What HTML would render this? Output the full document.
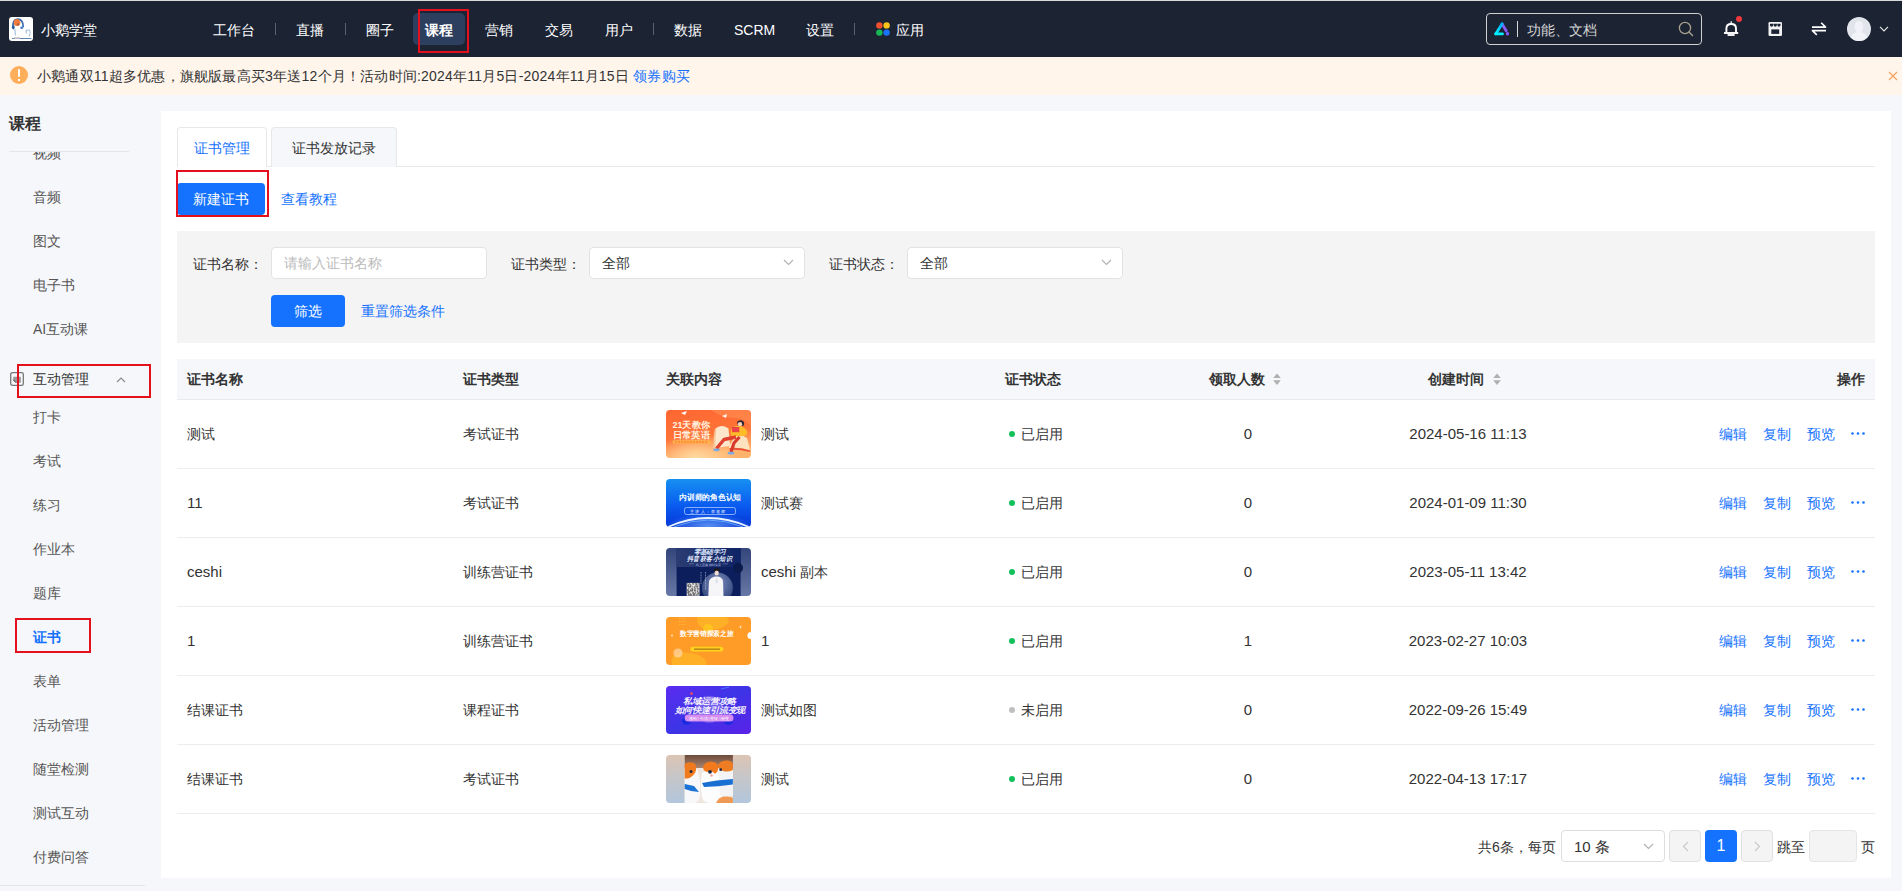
<!DOCTYPE html>
<html><head><meta charset="utf-8">
<style>
*{box-sizing:border-box;margin:0;padding:0}
svg{display:block}
html,body{width:1902px;height:891px;overflow:hidden}
body{position:relative;background:#f5f7fa;font-family:"Liberation Sans",sans-serif;font-size:14px;color:#333}
.a{position:absolute;white-space:nowrap}
#topline{left:0;top:0;width:1902px;height:1px;background:#d9d9d9}
#nav{left:0;top:1px;width:1902px;height:56px;background:#1c2333}
.ni{color:#fff;font-size:14px;line-height:20px;top:19px}
.sep{width:1px;height:12px;background:#5a6170;top:23px}
#banner{left:0;top:57px;width:1902px;height:38px;background:#fff5eb}
#card{left:161px;top:111px;width:1730px;height:767px;background:#fff}
.side{color:#555;line-height:20px;left:33px}
.red{border:2px solid #e5101d}
.blue{color:#1472ff}
.btn{background:#1472ff;color:#fff;border-radius:4px;text-align:center}
.th{font-weight:bold;color:#333;line-height:20px;top:369px}
.row{left:177px;width:1698px;height:69px;border-bottom:1px solid #ebedf0}
.cell{line-height:20px;top:24px}
.thumb{left:489px;top:10px;width:85px;height:48px;border-radius:4px;overflow:hidden}
.num{font-size:15px}
.dot{width:6px;height:6px;border-radius:3px;top:31px;left:832px}
</style></head><body>
<div class="a" id="topline"></div>
<div class="a" id="nav"></div>
<!-- NAV -->
<div class="a" style="left:9px;top:17px;width:24px;height:24px;background:#fff;border-radius:3px;overflow:hidden">
  <svg width="24" height="24" viewBox="0 0 24 24">
    <path d="M4 11 Q3.2 2.2 8.6 2.1 Q14.2 2.2 14.2 10" stroke="#3a6aae" stroke-width="1.7" fill="none"/>
    <ellipse cx="4.3" cy="10.3" rx="1.4" ry="2.1" fill="#2c5c9c"/>
    <ellipse cx="12.8" cy="10.7" rx="1.6" ry="1.2" fill="#4a80c8"/>
    <ellipse cx="8" cy="5.6" rx="3.3" ry="3.5" fill="#f27a3a"/>
    <circle cx="9" cy="7.4" r="1.2" fill="#a8643a"/>
    <path d="M5.9 12 L6.4 18.5 M17.1 12.6 L17.3 16.5" stroke="#7ea6cc" stroke-width="0.8" fill="none"/>
    <path d="M17.4 14 Q19 12.2 20.6 13 Q22.2 15 20.2 19.5" stroke="#8ab0d4" stroke-width="0.8" fill="none"/>
    <path d="M3 21.5 L22.5 21.5" stroke="#4a7aa4" stroke-width="0.9"/>
    <rect x="5.3" y="20.2" width="5" height="1.6" fill="#f6c8c0" stroke="#a8c4d8" stroke-width="0.5"/>
  </svg>
</div>
<div class="a ni" style="left:41px;top:20px">小鹅学堂</div>
<div class="a ni" style="left:213px;top:20px">工作台</div>
<div class="a sep" style="left:275px"></div>
<div class="a ni" style="left:296px;top:20px">直播</div>
<div class="a sep" style="left:345px"></div>
<div class="a ni" style="left:366px;top:20px">圈子</div>
<div class="a" style="left:413px;top:13px;width:52px;height:32px;background:#2d3f5e;border-radius:5px"></div>
<div class="a ni" style="left:425px;top:20px;font-weight:bold">课程</div>
<div class="a red" style="left:418px;top:9px;width:51px;height:44px"></div>
<div class="a ni" style="left:485px;top:20px">营销</div>
<div class="a ni" style="left:545px;top:20px">交易</div>
<div class="a ni" style="left:605px;top:20px">用户</div>
<div class="a sep" style="left:653px"></div>
<div class="a ni" style="left:674px;top:20px">数据</div>
<div class="a ni" style="left:734px;top:20px">SCRM</div>
<div class="a ni" style="left:806px;top:20px">设置</div>
<div class="a sep" style="left:854px"></div>
<div class="a" style="left:876px;top:22px;width:14px;height:14px">
  <svg width="14" height="14" viewBox="0 0 14 14"><circle cx="3.4" cy="3.4" r="3.2" fill="#f0502e"/><circle cx="10.6" cy="3.4" r="3.2" fill="#fbc21a"/><circle cx="3.4" cy="10.6" r="3.2" fill="#17b955"/><circle cx="10.6" cy="10.6" r="3.2" fill="#1a73f5"/></svg>
</div>
<div class="a ni" style="left:896px;top:20px">应用</div>
<!-- search -->
<div class="a" style="left:1486px;top:13px;width:216px;height:32px;border:1px solid #d0d0d0;border-radius:4px"></div>
<div class="a" style="left:1494px;top:22px;width:16px;height:14px">
  <svg width="16" height="14" viewBox="0 0 16 14"><defs><linearGradient id="lg1" x1="0" y1="1" x2="0.3" y2="0"><stop offset="0" stop-color="#00f4ff"/><stop offset="1" stop-color="#00b4ff"/></linearGradient></defs>
  <path d="M8.2 2.2 L12.2 8.8" stroke="#8a5cff" stroke-width="2.8" fill="none" stroke-linecap="round"/>
  <path d="M1.7 11.9 L8.1 1.7" stroke="url(#lg1)" stroke-width="2.8" fill="none" stroke-linecap="round"/>
  <path d="M1.7 11.9 L8.5 11.9" stroke="#00eeff" stroke-width="2.8" stroke-linecap="round"/>
  <circle cx="13.5" cy="11.8" r="1.7" fill="#8a5cff"/></svg>
</div>
<div class="a" style="left:1517px;top:21px;width:1px;height:16px;background:#d8d8d8"></div>
<div class="a ni" style="left:1527px;top:20px;color:#d6d6d6">功能、文档</div>
<div class="a" style="left:1678px;top:21px;width:16px;height:16px">
  <svg width="16" height="16" viewBox="0 0 16 16"><circle cx="7" cy="7" r="5.6" stroke="#a8a090" stroke-width="1.3" fill="none"/><path d="M11 11 L14.5 14.5" stroke="#a8a090" stroke-width="1.4" stroke-linecap="round"/></svg>
</div>
<!-- right icons -->
<div class="a" style="left:1723px;top:20px;width:16px;height:17px">
  <svg width="16" height="17" viewBox="0 0 16 17"><path d="M3.4 12.5 L3.4 8.5 Q3.4 4 8.2 4 Q13 4 13 8.5 L13 12.5" stroke="#fff" stroke-width="1.9" fill="none"/><path d="M1 13 L15.2 13" stroke="#fff" stroke-width="1.9"/><rect x="4.6" y="14" width="7" height="2" fill="#eee"/><path d="M8.2 4 L8.2 1.2" stroke="#fff" stroke-width="1.3"/></svg>
</div>
<div class="a" style="left:1736px;top:16px;width:6px;height:6px;border-radius:3px;background:#f0383c"></div>
<div class="a" style="left:1768px;top:21px;width:15px;height:16px">
  <svg width="15" height="16" viewBox="0 0 15 16"><rect x="0.5" y="1" width="13.5" height="14" rx="1.3" fill="#f2f2f4"/><rect x="3.3" y="8.4" width="7.9" height="4.5" fill="#1c2333"/><path d="M1.9 2.8 h3.3 v1.2 a1.65 1.65 0 0 1 -3.3 0 z M5.6 2.8 h3.3 v1.2 a1.65 1.65 0 0 1 -3.3 0 z M9.3 2.8 h3.3 v1.2 a1.65 1.65 0 0 1 -3.3 0 z" fill="#1c2333"/></svg>
</div>
<div class="a" style="left:1811px;top:22px;width:16px;height:14px">
  <svg width="16" height="14" viewBox="0 0 16 14"><path d="M1 5.1 L14.6 5.1 L10.2 0.8" stroke="#fff" stroke-width="1.6" fill="none" stroke-linejoin="round"/><path d="M15 8.6 L1.4 8.6 L5.8 12.9" stroke="#fff" stroke-width="1.6" fill="none" stroke-linejoin="round"/></svg>
</div>
<div class="a" style="left:1847px;top:17px;width:24px;height:24px;border-radius:12px;background:#e2e4ec;overflow:hidden">
  <svg width="24" height="24" viewBox="0 0 24 24"><path d="M12 4.2 Q16.3 4.2 16.3 9.2 Q16.3 13 14.2 15.2 Q20 16.5 21.5 24 L2.5 24 Q4 16.5 9.8 15.2 Q7.7 13 7.7 9.2 Q7.7 4.2 12 4.2 Z" fill="#f2f3f8"/></svg>
</div>
<div class="a" style="left:1879px;top:26px;width:10px;height:7px">
  <svg width="10" height="7" viewBox="0 0 10 7"><path d="M1 0.8 L5 4.8 L9 0.8" stroke="#e6e6e6" stroke-width="1.2" fill="none"/></svg>
</div>

<div class="a" id="banner"></div>
<div class="a" id="card"></div>
<!-- BANNER -->
<div class="a" style="left:10px;top:66px;width:18px;height:18px;border-radius:9px;background:#ffaf5c"></div>
<div class="a" style="left:18px;top:69px;width:2px;height:8px;background:#fff;border-radius:1px"></div>
<div class="a" style="left:18px;top:79px;width:2px;height:2px;background:#fff"></div>
<div class="a" style="left:37px;top:66px;line-height:20px;color:#333;letter-spacing:0.21px">小鹅通双11超多优惠，旗舰版最高买3年送12个月！活动时间:2024年11月5日-2024年11月15日 <span style="color:#1472ff">领券购买</span></div>
<div class="a" style="left:1888px;top:71px;width:10px;height:10px">
  <svg width="10" height="10" viewBox="0 0 10 10"><path d="M1 1 L9 9 M9 1 L1 9" stroke="#f5a05a" stroke-width="1.1"/></svg>
</div>
<!-- SIDEBAR -->
<div class="a" style="left:9px;top:113px;font-size:16px;font-weight:bold;line-height:22px;color:#333">课程</div>
<div class="a" style="left:0;top:152px;width:161px;height:734px;overflow:hidden">
  <div class="a side" style="top:-9px">视频</div>
  <div class="a side" style="top:35px">音频</div>
  <div class="a side" style="top:79px">图文</div>
  <div class="a side" style="top:123px">电子书</div>
  <div class="a side" style="top:167px">AI互动课</div>
  <div class="a side" style="top:217px;color:#333">互动管理</div>
  <div class="a side" style="top:255px">打卡</div>
  <div class="a side" style="top:299px">考试</div>
  <div class="a side" style="top:343px">练习</div>
  <div class="a side" style="top:387px">作业本</div>
  <div class="a side" style="top:431px">题库</div>
  <div class="a side" style="top:475px;color:#1472ff;font-weight:bold">证书</div>
  <div class="a side" style="top:519px">表单</div>
  <div class="a side" style="top:563px">活动管理</div>
  <div class="a side" style="top:607px">随堂检测</div>
  <div class="a side" style="top:651px">测试互动</div>
  <div class="a side" style="top:695px">付费问答</div>
</div>
<div class="a" style="left:9px;top:151px;width:120px;height:1px;background:#e3e5e8"></div>
<div class="a" style="left:0;top:885px;width:145px;height:1px;background:#e3e5e8"></div>
<div class="a" style="left:10px;top:372px;width:14px;height:14px">
  <svg width="14" height="14" viewBox="0 0 14 14"><rect x="0.7" y="0.7" width="12.6" height="12.6" rx="1.6" stroke="#777" stroke-width="1.3" fill="none"/><path d="M3.2 4.8 L10.8 4.8 L10.8 10.8 L6.2 10.8 L3.2 7.8 Z" fill="#999"/><path d="M3.2 7.8 L6.2 10.8" stroke="#333" stroke-width="1"/></svg>
</div>
<div class="a" style="left:116px;top:376px;width:10px;height:7px">
  <svg width="10" height="7" viewBox="0 0 10 7"><path d="M1 6 L5 2 L9 6" stroke="#888" stroke-width="1.1" fill="none"/></svg>
</div>
<div class="a red" style="left:17px;top:364px;width:134px;height:34px"></div>
<div class="a red" style="left:15px;top:618px;width:76px;height:35px"></div>
<!-- TABS -->
<div class="a" style="left:397px;top:166px;width:1478px;height:1px;background:#e8e8e8"></div>
<div class="a" style="left:266px;top:166px;width:6px;height:1px;background:#e8e8e8"></div>
<div class="a" style="left:177px;top:127px;width:90px;height:40px;background:#fff;border:1px solid #e8e8e8;border-bottom:none;border-radius:4px 4px 0 0"></div>
<div class="a" style="left:194px;top:138px;line-height:20px;color:#1472ff">证书管理</div>
<div class="a" style="left:271px;top:127px;width:126px;height:40px;background:#f5f7fa;border:1px solid #e8e8e8;border-bottom:none;border-radius:4px 4px 0 0"></div>
<div class="a" style="left:292px;top:138px;line-height:20px;color:#333">证书发放记录</div>
<!-- ACTIONS -->
<div class="a btn" style="left:177px;top:183px;width:88px;height:32px;line-height:32px">新建证书</div>
<div class="a red" style="left:176px;top:170px;width:93px;height:47px"></div>
<div class="a blue" style="left:281px;top:189px;line-height:20px">查看教程</div>
<!-- FILTER -->
<div class="a" style="left:177px;top:231px;width:1698px;height:112px;background:#f4f4f4"></div>
<div class="a" style="left:193px;top:254px;line-height:20px;color:#333">证书名称：</div>
<div class="a" style="left:271px;top:247px;width:216px;height:32px;background:#fff;border:1px solid #e3e3e3;border-radius:4px"></div>
<div class="a" style="left:284px;top:253px;line-height:20px;color:#bbb">请输入证书名称</div>
<div class="a" style="left:511px;top:254px;line-height:20px;color:#333">证书类型：</div>
<div class="a" style="left:589px;top:247px;width:216px;height:32px;background:#fff;border:1px solid #e3e3e3;border-radius:4px"></div>
<div class="a" style="left:602px;top:253px;line-height:20px;color:#333">全部</div>
<div class="a" style="left:783px;top:259px;width:11px;height:7px"><svg width="11" height="7" viewBox="0 0 11 7"><path d="M1 1 L5.5 5.5 L10 1" stroke="#b0b0b0" stroke-width="1.1" fill="none"/></svg></div>
<div class="a" style="left:829px;top:254px;line-height:20px;color:#333">证书状态：</div>
<div class="a" style="left:907px;top:247px;width:216px;height:32px;background:#fff;border:1px solid #e3e3e3;border-radius:4px"></div>
<div class="a" style="left:920px;top:253px;line-height:20px;color:#333">全部</div>
<div class="a" style="left:1101px;top:259px;width:11px;height:7px"><svg width="11" height="7" viewBox="0 0 11 7"><path d="M1 1 L5.5 5.5 L10 1" stroke="#b0b0b0" stroke-width="1.1" fill="none"/></svg></div>
<div class="a btn" style="left:271px;top:295px;width:74px;height:32px;line-height:32px">筛选</div>
<div class="a blue" style="left:361px;top:301px;line-height:20px">重置筛选条件</div>
<!-- TABLE HEADER -->
<div class="a" style="left:177px;top:359px;width:1698px;height:41px;background:#f5f7fa;border-bottom:1px solid #e8eaee"></div>
<div class="a th" style="left:187px">证书名称</div>
<div class="a th" style="left:463px">证书类型</div>
<div class="a th" style="left:666px">关联内容</div>
<div class="a th" style="left:1005px">证书状态</div>
<div class="a th" style="left:1209px">领取人数</div>
<div class="a" style="left:1272.5px;top:373px;width:8px;height:12px"><svg width="8" height="12" viewBox="0 0 8 12"><path d="M4 0.6 L7.8 4.9 L0.2 4.9 Z M4 11.9 L7.8 7.3 L0.2 7.3 Z" fill="#b0b0b0"/></svg></div>
<div class="a th" style="left:1428px">创建时间</div>
<div class="a" style="left:1492.5px;top:373px;width:8px;height:12px"><svg width="8" height="12" viewBox="0 0 8 12"><path d="M4 0.6 L7.8 4.9 L0.2 4.9 Z M4 11.9 L7.8 7.3 L0.2 7.3 Z" fill="#b0b0b0"/></svg></div>
<div class="a th" style="left:1837px">操作</div>
<!-- PAGINATION -->
<div class="a" style="left:1478px;top:837px;line-height:20px;color:#333">共6条，每页</div>
<div class="a" style="left:1561px;top:830px;width:104px;height:32px;background:#fff;border:1px solid #dedede;border-radius:4px"></div>
<div class="a num" style="left:1574px;top:837px;line-height:20px;color:#333">10 条</div>
<div class="a" style="left:1643px;top:843px;width:11px;height:7px"><svg width="11" height="7" viewBox="0 0 11 7"><path d="M1 1 L5.5 5.5 L10 1" stroke="#b0b0b0" stroke-width="1.1" fill="none"/></svg></div>
<div class="a" style="left:1669px;top:830px;width:32px;height:32px;background:#f4f4f4;border:1px solid #e0e0e0;border-radius:4px"></div>
<div class="a" style="left:1682px;top:841px;width:7px;height:11px"><svg width="7" height="11" viewBox="0 0 7 11"><path d="M6 1 L1.5 5.5 L6 10" stroke="#c8c8c8" stroke-width="1.1" fill="none"/></svg></div>
<div class="a" style="left:1705px;top:830px;width:32px;height:32px;background:#1472ff;border-radius:4px;color:#fff;text-align:center;line-height:32px;font-size:16px">1</div>
<div class="a" style="left:1741px;top:830px;width:32px;height:32px;background:#f4f4f4;border:1px solid #e0e0e0;border-radius:4px"></div>
<div class="a" style="left:1754px;top:841px;width:7px;height:11px"><svg width="7" height="11" viewBox="0 0 7 11"><path d="M1 1 L5.5 5.5 L1 10" stroke="#c8c8c8" stroke-width="1.1" fill="none"/></svg></div>
<div class="a" style="left:1777px;top:837px;line-height:20px;color:#333">跳至</div>
<div class="a" style="left:1809px;top:830px;width:48px;height:32px;background:#f4f4f4;border:1px solid #e5e5e5;border-radius:4px"></div>
<div class="a" style="left:1861px;top:837px;line-height:20px;color:#333">页</div>
<!-- ROWS -->
<div class="a row" style="top:400px">
  <div class="a cell" style="left:10px">测试</div>
  <div class="a cell" style="left:286px">考试证书</div>
  <div class="a thumb t1"><svg width="85" height="48" viewBox="0 0 85 48">
<defs>
<linearGradient id="g1a" x1="0" y1="0" x2="0.3" y2="1"><stop offset="0" stop-color="#ff6631"/><stop offset="0.6" stop-color="#ff7438"/><stop offset="1" stop-color="#ffb26a"/></linearGradient>
<radialGradient id="g1b" cx="0.35" cy="1" r="0.5"><stop offset="0" stop-color="#ffd9a0"/><stop offset="1" stop-color="#ffd9a0" stop-opacity="0"/></radialGradient>
</defs>
<rect width="85" height="48" fill="url(#g1a)"/>
<rect width="85" height="48" fill="url(#g1b)"/>
<path d="M45 0 Q55 8 70 8 Q85 10 85 20 L85 0 Z" fill="#ff8a50" opacity="0.7"/>
<text x="6.5" y="18.4" font-family="Liberation Sans" font-weight="bold" font-size="8.8" fill="#fff3e0" textLength="37.5" lengthAdjust="spacingAndGlyphs">21天教你</text>
<text x="6.5" y="28" font-family="Liberation Sans" font-weight="bold" font-size="8.8" fill="#fff3e0" textLength="37.5" lengthAdjust="spacingAndGlyphs">日常英语</text>
<rect x="6.5" y="30.3" width="38.5" height="3.4" rx="1.5" fill="#ffb14a"/>
<path d="M9 32 L42 32" stroke="#ff6a30" stroke-width="1" stroke-dasharray="2 1"/>
<path d="M47.5 38 L49 19 Q55 13.5 62.5 18.5 L64 36 Z" fill="#fde7cc"/>
<path d="M49 19 Q47 28 47.5 38 L49.5 38 Q49 28 50.5 19.5 Z" fill="#f6c89a"/>
<path d="M63 36.5 L69 26 Q76 24.5 81 28 L84 40 Q74 37 63 38 Z" fill="#fde2c0"/>
<path d="M64 38 Q74 37 84 40.5 L84 42 Q74 39 63 39.5 Z" fill="#e8503a"/>
<path d="M71 12 Q74 9 77.5 11.5 Q79 14 77 16 L72 16 Z" fill="#2a2438"/>
<circle cx="74" cy="14.2" r="2.2" fill="#f8d0b0"/>
<path d="M65 24 Q64 17 70 16 Q78 15.5 81 21 Q82 25 78 26 L66 26.5 Z" fill="#ffbb28"/>
<rect x="66" y="17" width="7.3" height="5.2" fill="#e8444a"/>
<path d="M70 27 L58 29.5 L50.5 38.5" stroke="#e0402e" stroke-width="3.4" fill="none" stroke-linejoin="round"/>
<path d="M73.5 27 L68 33 L65 42" stroke="#d8382a" stroke-width="3.2" fill="none" stroke-linejoin="round"/>
<ellipse cx="50.5" cy="39.8" rx="3.4" ry="1.4" fill="#7aaae6"/>
<ellipse cx="65" cy="43.2" rx="3.4" ry="1.4" fill="#7aaae6"/>
<path d="M15 3 L21 1 L19 5 Z" fill="#fff"/>
<path d="M56 6 L61 4 L60 8 Z" fill="#fff" opacity="0.9"/>
</svg></div>
  <div class="a cell" style="left:584px">测试</div>
  <div class="a dot" style="background:#13c15a"></div>
  <div class="a cell" style="left:844px">已启用</div>
  <div class="a cell num" style="left:1047px;width:48px;text-align:center">0</div>
  <div class="a cell num" style="left:1211px;width:160px;text-align:center">2024-05-16 11:13</div>
  <div class="a cell blue" style="left:1542px">编辑</div>
  <div class="a cell blue" style="left:1586px">复制</div>
  <div class="a cell blue" style="left:1630px">预览</div>
  <div class="a" style="left:1674px;top:32px;width:14px;height:3px"><svg width="14" height="3" viewBox="0 0 14 3"><circle cx="1.5" cy="1.5" r="1.3" fill="#1472ff"/><circle cx="7" cy="1.5" r="1.3" fill="#1472ff"/><circle cx="12.5" cy="1.5" r="1.3" fill="#1472ff"/></svg></div>
</div>
<div class="a row" style="top:469px">
  <div class="a cell num" style="left:10px">11</div>
  <div class="a cell" style="left:286px">考试证书</div>
  <div class="a thumb t2"><svg width="85" height="48" viewBox="0 0 85 48">
<defs>
<linearGradient id="g2a" x1="0" y1="0" x2="0" y2="1"><stop offset="0" stop-color="#1690f2"/><stop offset="0.55" stop-color="#0a5cf0"/><stop offset="1" stop-color="#0636d8"/></linearGradient>
<radialGradient id="g2b" cx="0.5" cy="0.95" r="0.5"><stop offset="0" stop-color="#8ec8ff"/><stop offset="1" stop-color="#8ec8ff" stop-opacity="0"/></radialGradient>
</defs>
<rect width="85" height="48" fill="url(#g2a)"/>
<rect y="24" width="85" height="24" fill="url(#g2b)" opacity="0.6"/>
<path d="M2 48 Q42 30 83 48" stroke="#e8f4ff" stroke-width="1.8" fill="none"/>
<path d="M8 48 Q42 34 77 48" stroke="#7fc0ff" stroke-width="1" fill="none" opacity="0.7"/>
<text x="13" y="21" font-family="Liberation Sans" font-weight="bold" font-size="7.8" fill="#fff" textLength="62" lengthAdjust="spacingAndGlyphs">内训师的角色认知</text>
<rect x="18.5" y="28.5" width="51" height="7" rx="2" stroke="#bcd8ff" stroke-width="0.7" fill="none"/>
<text x="42.5" y="34" text-anchor="middle" font-family="Liberation Sans" font-size="4" fill="#fff" letter-spacing="1.2">主讲人：李老师</text>
</svg></div>
  <div class="a cell" style="left:584px">测试赛</div>
  <div class="a dot" style="background:#13c15a"></div>
  <div class="a cell" style="left:844px">已启用</div>
  <div class="a cell num" style="left:1047px;width:48px;text-align:center">0</div>
  <div class="a cell num" style="left:1211px;width:160px;text-align:center">2024-01-09 11:30</div>
  <div class="a cell blue" style="left:1542px">编辑</div>
  <div class="a cell blue" style="left:1586px">复制</div>
  <div class="a cell blue" style="left:1630px">预览</div>
  <div class="a" style="left:1674px;top:32px;width:14px;height:3px"><svg width="14" height="3" viewBox="0 0 14 3"><circle cx="1.5" cy="1.5" r="1.3" fill="#1472ff"/><circle cx="7" cy="1.5" r="1.3" fill="#1472ff"/><circle cx="12.5" cy="1.5" r="1.3" fill="#1472ff"/></svg></div>
</div>
<div class="a row" style="top:538px">
  <div class="a cell num" style="left:10px">ceshi</div>
  <div class="a cell" style="left:286px">训练营证书</div>
  <div class="a thumb t3"><svg width="85" height="48" viewBox="0 0 85 48">
<defs>
<linearGradient id="g3a" x1="0" y1="0" x2="0" y2="1"><stop offset="0" stop-color="#33457a"/><stop offset="1" stop-color="#6878a6"/></linearGradient>
<radialGradient id="g3b" cx="0.5" cy="0.35" r="0.6"><stop offset="0" stop-color="#8090c0"/><stop offset="1" stop-color="#34487e"/></radialGradient>
<linearGradient id="g3c" x1="0" y1="0" x2="1" y2="0"><stop offset="0" stop-color="#2a3c72"/><stop offset="1" stop-color="#0f2466"/></linearGradient>
</defs>
<rect width="85" height="48" fill="url(#g3a)"/>
<rect x="10.6" y="0" width="64" height="48" fill="#0c1f5c"/>
<rect x="10.6" y="0" width="64" height="19" fill="url(#g3c)"/>
<circle cx="51.4" cy="40" r="15.5" fill="url(#g3b)"/>
<circle cx="72" cy="20" r="5" fill="#0a1a4a"/>
<text x="27.5" y="6.2" font-family="Liberation Sans" font-weight="bold" font-style="italic" font-size="6.4" fill="#dfe8ff" textLength="32" lengthAdjust="spacingAndGlyphs">零基础学习</text>
<text x="20.7" y="13.2" font-family="Liberation Sans" font-weight="bold" font-style="italic" font-size="6.5" fill="#e8eeff" textLength="45.8" lengthAdjust="spacingAndGlyphs">抖音获客小知识</text>
<path d="M23 15.8 L28 15.8 M57 15.8 L62 15.8" stroke="#8a9ac8" stroke-width="0.5"/>
<text x="42.5" y="17.5" text-anchor="middle" font-family="Liberation Sans" font-size="2.8" fill="#b0bce0">线上直播 限时免费</text>
<path d="M47.5 23.5 Q47.5 19.8 50.7 19.8 Q53.9 19.8 53.9 23.5 Z" fill="#1a1a22"/>
<ellipse cx="50.7" cy="25" rx="2.2" ry="2.6" fill="#f2dcd0"/>
<path d="M42.3 48 L43 33 Q45 28.5 50.7 28.5 Q56 28.5 57 33 L57.5 48 Z" fill="#f6f6f8"/>
<path d="M50.7 28.5 L49.5 34 L50.7 36 L52 34 Z" fill="#dde0e8"/>
<rect x="20.7" y="34.9" width="12.8" height="12.8" fill="#e6e6e6"/>
<rect x="21.2" y="35.4" width="1" height="1" fill="#333"/><rect x="23.2" y="35.4" width="1" height="1" fill="#333"/><rect x="26.2" y="35.4" width="1" height="1" fill="#333"/><rect x="27.2" y="35.4" width="1" height="1" fill="#333"/><rect x="29.2" y="35.4" width="1" height="1" fill="#333"/><rect x="30.2" y="35.4" width="1" height="1" fill="#333"/><rect x="32.2" y="35.4" width="1" height="1" fill="#333"/><rect x="22.2" y="36.4" width="1" height="1" fill="#333"/><rect x="24.2" y="36.4" width="1" height="1" fill="#333"/><rect x="30.2" y="36.4" width="1" height="1" fill="#333"/><rect x="21.2" y="37.4" width="1" height="1" fill="#333"/><rect x="22.2" y="37.4" width="1" height="1" fill="#333"/><rect x="24.2" y="37.4" width="1" height="1" fill="#333"/><rect x="29.2" y="37.4" width="1" height="1" fill="#333"/><rect x="31.2" y="37.4" width="1" height="1" fill="#333"/><rect x="22.2" y="38.4" width="1" height="1" fill="#333"/><rect x="23.2" y="38.4" width="1" height="1" fill="#333"/><rect x="24.2" y="38.4" width="1" height="1" fill="#333"/><rect x="26.2" y="38.4" width="1" height="1" fill="#333"/><rect x="28.2" y="38.4" width="1" height="1" fill="#333"/><rect x="30.2" y="38.4" width="1" height="1" fill="#333"/><rect x="31.2" y="38.4" width="1" height="1" fill="#333"/><rect x="28.2" y="39.4" width="1" height="1" fill="#333"/><rect x="22.2" y="40.4" width="1" height="1" fill="#333"/><rect x="25.2" y="40.4" width="1" height="1" fill="#333"/><rect x="26.2" y="40.4" width="1" height="1" fill="#333"/><rect x="29.2" y="40.4" width="1" height="1" fill="#333"/><rect x="31.2" y="40.4" width="1" height="1" fill="#333"/><rect x="32.2" y="40.4" width="1" height="1" fill="#333"/><rect x="21.2" y="41.4" width="1" height="1" fill="#333"/><rect x="24.2" y="41.4" width="1" height="1" fill="#333"/><rect x="26.2" y="41.4" width="1" height="1" fill="#333"/><rect x="28.2" y="41.4" width="1" height="1" fill="#333"/><rect x="21.2" y="42.4" width="1" height="1" fill="#333"/><rect x="22.2" y="42.4" width="1" height="1" fill="#333"/><rect x="24.2" y="42.4" width="1" height="1" fill="#333"/><rect x="25.2" y="42.4" width="1" height="1" fill="#333"/><rect x="26.2" y="42.4" width="1" height="1" fill="#333"/><rect x="28.2" y="42.4" width="1" height="1" fill="#333"/><rect x="29.2" y="42.4" width="1" height="1" fill="#333"/><rect x="31.2" y="42.4" width="1" height="1" fill="#333"/><rect x="22.2" y="43.4" width="1" height="1" fill="#333"/><rect x="23.2" y="43.4" width="1" height="1" fill="#333"/><rect x="31.2" y="43.4" width="1" height="1" fill="#333"/><rect x="21.2" y="44.4" width="1" height="1" fill="#333"/><rect x="22.2" y="44.4" width="1" height="1" fill="#333"/><rect x="26.2" y="44.4" width="1" height="1" fill="#333"/><rect x="27.2" y="44.4" width="1" height="1" fill="#333"/><rect x="29.2" y="44.4" width="1" height="1" fill="#333"/><rect x="32.2" y="44.4" width="1" height="1" fill="#333"/><rect x="22.2" y="45.4" width="1" height="1" fill="#333"/><rect x="24.2" y="45.4" width="1" height="1" fill="#333"/><rect x="27.2" y="45.4" width="1" height="1" fill="#333"/><rect x="28.2" y="45.4" width="1" height="1" fill="#333"/><rect x="31.2" y="45.4" width="1" height="1" fill="#333"/><rect x="32.2" y="45.4" width="1" height="1" fill="#333"/><rect x="22.2" y="46.4" width="1" height="1" fill="#333"/><rect x="23.2" y="46.4" width="1" height="1" fill="#333"/><rect x="24.2" y="46.4" width="1" height="1" fill="#333"/><rect x="25.2" y="46.4" width="1" height="1" fill="#333"/><rect x="27.2" y="46.4" width="1" height="1" fill="#333"/><rect x="28.2" y="46.4" width="1" height="1" fill="#333"/><rect x="30.2" y="46.4" width="1" height="1" fill="#333"/>
<path d="M35 24 L35 36 M39.5 24 L39.5 42" stroke="#c8d0e8" stroke-width="0.6" stroke-dasharray="1 0.6"/>
</svg></div>
  <div class="a cell" style="left:584px"><span style="font-size:15px">ceshi</span> 副本</div>
  <div class="a dot" style="background:#13c15a"></div>
  <div class="a cell" style="left:844px">已启用</div>
  <div class="a cell num" style="left:1047px;width:48px;text-align:center">0</div>
  <div class="a cell num" style="left:1211px;width:160px;text-align:center">2023-05-11 13:42</div>
  <div class="a cell blue" style="left:1542px">编辑</div>
  <div class="a cell blue" style="left:1586px">复制</div>
  <div class="a cell blue" style="left:1630px">预览</div>
  <div class="a" style="left:1674px;top:32px;width:14px;height:3px"><svg width="14" height="3" viewBox="0 0 14 3"><circle cx="1.5" cy="1.5" r="1.3" fill="#1472ff"/><circle cx="7" cy="1.5" r="1.3" fill="#1472ff"/><circle cx="12.5" cy="1.5" r="1.3" fill="#1472ff"/></svg></div>
</div>
<div class="a row" style="top:607px">
  <div class="a cell num" style="left:10px">1</div>
  <div class="a cell" style="left:286px">训练营证书</div>
  <div class="a thumb t4"><svg width="85" height="48" viewBox="0 0 85 48">
<rect width="85" height="48" fill="#ff9c28"/>
<path d="M31 0 Q30 10 40 12 Q52 14 60 8 Q66 4 60 0 Z" fill="#ffb026"/>
<circle cx="42" cy="12" r="5" fill="#ffc81e" opacity="0.8"/>
<path d="M6 48 Q4 38 14 36 Q26 34 36 40 Q42 44 40 48 Z" fill="#ffb026"/>
<circle cx="12" cy="36" r="4.6" fill="#ffd6a0" opacity="0.75"/>
<text x="14" y="19" font-family="Liberation Sans" font-weight="bold" font-size="6.8" fill="#fff" textLength="53.5" lengthAdjust="spacingAndGlyphs">数字营销探索之旅</text>
<rect x="24.4" y="29.8" width="33" height="4.8" rx="2.4" fill="#ffd21e"/>
<rect x="28" y="31.4" width="26" height="1.6" fill="#8a5a10" opacity="0.6"/>
<circle cx="85" cy="18.5" r="3.6" fill="#fff"/>
<path d="M6 19.8 L7 18.5 L6 17.2 L5 18.5 Z M74.5 11.5 L75.5 10 L74.5 8.5 L73.5 10 Z" fill="#fff" opacity="0.8"/>
<path d="M13 1.5 L20 1.5 M13 4.5 L20 4.5 M13 7.5 L20 7.5" stroke="#ffc040" stroke-width="0.9" stroke-dasharray="1 1.2"/>
</svg></div>
  <div class="a cell num" style="left:584px">1</div>
  <div class="a dot" style="background:#13c15a"></div>
  <div class="a cell" style="left:844px">已启用</div>
  <div class="a cell num" style="left:1047px;width:48px;text-align:center">1</div>
  <div class="a cell num" style="left:1211px;width:160px;text-align:center">2023-02-27 10:03</div>
  <div class="a cell blue" style="left:1542px">编辑</div>
  <div class="a cell blue" style="left:1586px">复制</div>
  <div class="a cell blue" style="left:1630px">预览</div>
  <div class="a" style="left:1674px;top:32px;width:14px;height:3px"><svg width="14" height="3" viewBox="0 0 14 3"><circle cx="1.5" cy="1.5" r="1.3" fill="#1472ff"/><circle cx="7" cy="1.5" r="1.3" fill="#1472ff"/><circle cx="12.5" cy="1.5" r="1.3" fill="#1472ff"/></svg></div>
</div>
<div class="a row" style="top:676px">
  <div class="a cell" style="left:10px">结课证书</div>
  <div class="a cell" style="left:286px">课程证书</div>
  <div class="a thumb t5"><svg width="85" height="48" viewBox="0 0 85 48">
<defs>
<linearGradient id="g5a" x1="0" y1="0" x2="1" y2="1"><stop offset="0" stop-color="#5b2cf2"/><stop offset="0.5" stop-color="#3d34e6"/><stop offset="1" stop-color="#5a22e8"/></linearGradient>
</defs>
<rect width="85" height="48" fill="url(#g5a)"/>
<circle cx="43.3" cy="23.4" r="13.6" fill="#9478f0" opacity="0.55"/>
<circle cx="43.3" cy="23.4" r="11" stroke="#b8a0ff" stroke-width="0.6" fill="none" opacity="0.6"/>
<ellipse cx="20.5" cy="35" rx="4.5" ry="3.8" fill="#1a2ae0"/>
<ellipse cx="62.5" cy="35" rx="4.5" ry="3.8" fill="#1a2ae0"/>
<circle cx="25.5" cy="7.5" r="1.3" fill="#ff5050"/>
<path d="M55 3 L63 1" stroke="#4aa0ff" stroke-width="1.2" opacity="0.6"/>
<text x="17.4" y="17.6" font-family="Liberation Sans" font-weight="bold" font-style="italic" font-size="8.4" fill="#f4eeff" textLength="52.8" lengthAdjust="spacingAndGlyphs">私域运营攻略</text>
<text x="8.6" y="27" font-family="Liberation Sans" font-weight="bold" font-style="italic" font-size="8.4" fill="#f4eeff" textLength="70.7" lengthAdjust="spacingAndGlyphs">如何快速引流变现</text>
<rect x="18.7" y="28.5" width="48.8" height="7" rx="3.5" fill="#d68cf0"/>
<text x="43" y="33.8" text-anchor="middle" font-family="Liberation Sans" font-size="3.6" fill="#fff">涨粉 | 引流 | 变现 | 裂变</text>
</svg></div>
  <div class="a cell" style="left:584px">测试如图</div>
  <div class="a dot" style="background:#bfbfbf"></div>
  <div class="a cell" style="left:844px">未启用</div>
  <div class="a cell num" style="left:1047px;width:48px;text-align:center">0</div>
  <div class="a cell num" style="left:1211px;width:160px;text-align:center">2022-09-26 15:49</div>
  <div class="a cell blue" style="left:1542px">编辑</div>
  <div class="a cell blue" style="left:1586px">复制</div>
  <div class="a cell blue" style="left:1630px">预览</div>
  <div class="a" style="left:1674px;top:32px;width:14px;height:3px"><svg width="14" height="3" viewBox="0 0 14 3"><circle cx="1.5" cy="1.5" r="1.3" fill="#1472ff"/><circle cx="7" cy="1.5" r="1.3" fill="#1472ff"/><circle cx="12.5" cy="1.5" r="1.3" fill="#1472ff"/></svg></div>
</div>
<div class="a row" style="top:745px">
  <div class="a cell" style="left:10px">结课证书</div>
  <div class="a cell" style="left:286px">考试证书</div>
  <div class="a thumb t6"><svg width="85" height="48" viewBox="0 0 85 48">
<defs>
<linearGradient id="g6a" x1="0" y1="0" x2="0" y2="1"><stop offset="0" stop-color="#dcc4b4"/><stop offset="0.5" stop-color="#c4c6ca"/><stop offset="1" stop-color="#b2c6dc"/></linearGradient>
<linearGradient id="g6b" x1="0" y1="0" x2="0" y2="1"><stop offset="0" stop-color="#6e4a3a"/><stop offset="1" stop-color="#a88470"/></linearGradient>
</defs>
<rect width="85" height="48" fill="url(#g6a)"/>
<rect x="18.7" y="0" width="48.2" height="48" fill="#efe6e0"/>
<rect x="18.7" y="0" width="48.2" height="13" fill="url(#g6b)"/>
<path d="M18.7 14 Q24 10 31 14 Q35 24 34 40 Q33 48 28 48 L18.7 48 Z" fill="#f8f8fa"/>
<path d="M36 18 Q45 12 54 18 Q58 30 56 44 Q54 48 46 48 Q37 48 36 42 Q34 30 36 18 Z" fill="#fdfdfd"/>
<path d="M52 14 Q60 10 66.9 13 L66.9 40 Q60 44 54 40 Q53 26 52 14 Z" fill="#f4f4f6"/>
<path d="M18.7 9 Q22 6 28 8 Q31.5 10 29.5 17 Q27 22 22 23.4 L18.7 23.4 Z" fill="#f07a1e"/>
<path d="M37 12 Q39 6.3 45 6.5 Q51.5 6.8 52.4 12 Q52 17 49 18.7 Q45 15 41 17 Q37 16 37 12 Z" fill="#f27a1c"/>
<path d="M52 10 Q55 5.3 61 5.6 Q66 6 66.9 9 L66.9 15 Q62 17.4 57 16 Q52 14 52 10 Z" fill="#ee7c22"/>
<circle cx="25" cy="16.4" r="1.5" fill="#1e2a44"/>
<circle cx="44" cy="16.8" r="1.9" fill="#1e2a44"/>
<circle cx="54.7" cy="14.7" r="1.4" fill="#1e2a44"/>
<circle cx="45.5" cy="20.5" r="1.2" fill="#f4a0a0"/>
<path d="M18.7 29 L28 31 L33 36.9 L25 36 L18.7 34 Z" fill="#1a74d6"/>
<path d="M36 28 Q50 25 66.9 24 L66.9 29.5 Q52 31.5 38 32 Z" fill="#1a70d2"/>
<path d="M50 48 Q53 41 59 41.5 Q65 41 66.9 43 L66.9 48 Z" fill="#ee8a3a" opacity="0.85"/>
</svg></div>
  <div class="a cell" style="left:584px">测试</div>
  <div class="a dot" style="background:#13c15a"></div>
  <div class="a cell" style="left:844px">已启用</div>
  <div class="a cell num" style="left:1047px;width:48px;text-align:center">0</div>
  <div class="a cell num" style="left:1211px;width:160px;text-align:center">2022-04-13 17:17</div>
  <div class="a cell blue" style="left:1542px">编辑</div>
  <div class="a cell blue" style="left:1586px">复制</div>
  <div class="a cell blue" style="left:1630px">预览</div>
  <div class="a" style="left:1674px;top:32px;width:14px;height:3px"><svg width="14" height="3" viewBox="0 0 14 3"><circle cx="1.5" cy="1.5" r="1.3" fill="#1472ff"/><circle cx="7" cy="1.5" r="1.3" fill="#1472ff"/><circle cx="12.5" cy="1.5" r="1.3" fill="#1472ff"/></svg></div>
</div>
<!-- /ROWS -->
</body></html>
